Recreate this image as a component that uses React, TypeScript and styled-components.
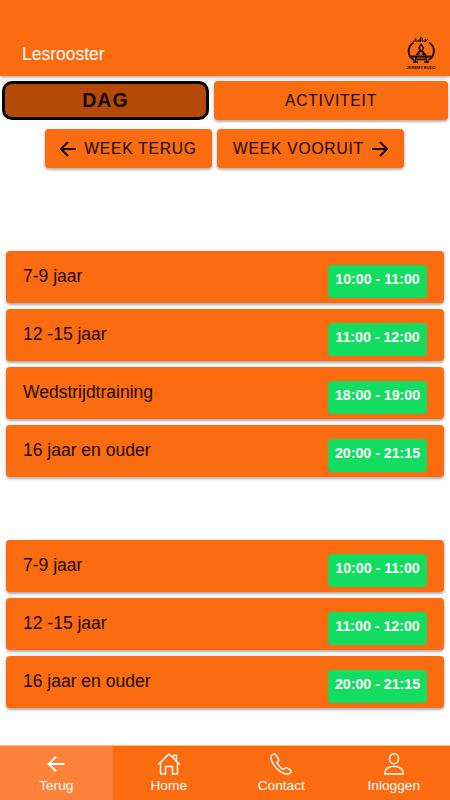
import React from "react";
import styled, { createGlobalStyle } from "styled-components";

const ORANGE = "#fb6b0f";

const GlobalStyle = createGlobalStyle`
  *, *::before, *::after { box-sizing: border-box; }
  body { margin: 0; background: #fff; font-family: "Liberation Sans", Arial, sans-serif; }
  button { font-family: inherit; border: 0; margin: 0; padding: 0; }
`;

const Screen = styled.div`
  display: flex;
  flex-direction: column;
  height: 800px;
  width: 100%;
  overflow: hidden;
  background: #fff;
`;

const Header = styled.header`
  flex: none;
  display: flex;
  align-items: flex-end;
  justify-content: space-between;
  height: 76px;
  padding: 0 13px 4px 22px;
  background: ${ORANGE};
  box-shadow: 0 1px 4px rgba(0, 0, 0, 0.4);
`;

const Title = styled.h1`
  margin: 0 0 8px;
  font-size: 17.5px;
  line-height: 20px;
  font-weight: 400;
  color: #fff;
`;

const Segments = styled.div`
  display: grid;
  grid-template-columns: 207px 234px;
  column-gap: 5px;
  padding: 5px 2px 0;
`;

const WeekNav = styled.div`
  display: flex;
  gap: 5px;
  padding: 9px 0 0 45px;
`;

const Button = styled.button<{ $selected?: boolean; $width?: number }>`
  display: flex;
  align-items: center;
  justify-content: center;
  gap: 8px;
  height: 39px;
  width: ${(p) => (p.$width ? `${p.$width}px` : "auto")};
  color: #150800;
  white-space: nowrap;
  background: ${(p) => (p.$selected ? "#b44a05" : ORANGE)};
  border: ${(p) => (p.$selected ? "3px solid #000" : "0")};
  border-radius: ${(p) => (p.$selected ? 10 : 4)}px;
  font-size: ${(p) => (p.$selected ? 19.5 : 15.6)}px;
  font-weight: ${(p) => (p.$selected ? 700 : 400)};
  letter-spacing: ${(p) => (p.$selected ? 1.1 : 0.8)}px;
  box-shadow: ${(p) => (p.$selected ? "none" : "0 2px 2px rgba(0,0,0,.2), 0 1px 4px rgba(0,0,0,.18)")};
`;

const DayList = styled.section<{ $top: number }>`
  display: flex;
  flex-direction: column;
  gap: 6px;
  padding: 0 6px;
  margin-top: ${(p) => p.$top}px;
`;

const Lesson = styled.article`
  display: flex;
  justify-content: space-between;
  align-items: flex-start;
  height: 52px;
  padding: 14px 17px 0;
  border-radius: 4px;
  background: ${ORANGE};
  box-shadow: 0 2px 2px rgba(0, 0, 0, 0.2), 0 1px 4px rgba(0, 0, 0, 0.2);
`;

const LessonName = styled.span`
  margin-top: 1px;
  font-size: 17.5px;
  line-height: 20px;
  color: #1b0b00;
`;

const TimeBadge = styled.span`
  width: 99px;
  height: 33px;
  padding-top: 6px;
  text-align: center;
  border-radius: 4px;
  background: #13dd60;
  color: #fff;
  font-size: 14.2px;
  line-height: 17px;
  font-weight: 700;
  white-space: nowrap;
`;

const TabBar = styled.nav`
  flex: none;
  display: grid;
  grid-template-columns: repeat(4, 1fr);
  height: 55px;
  margin-top: auto;
  border-top: 1px solid #fdb78c;
  background: ${ORANGE};
`;

const Tab = styled.button<{ $active?: boolean }>`
  display: flex;
  flex-direction: column;
  align-items: center;
  padding-top: 6px;
  color: #fff;
  background: ${(p) => (p.$active ? "#fc8239" : "transparent")};
  font-size: 13.7px;
  line-height: 16px;
`;

const TabIcon = styled.svg`
  width: 24px;
  height: 24px;
  margin-bottom: 2px;
  fill: none;
  stroke: currentColor;
  stroke-width: 1.4;
  stroke-linecap: round;
  stroke-linejoin: round;
`;

const ArrowSvg = styled.svg`
  flex: none;
  width: 16px;
  height: 16px;
  fill: none;
  stroke: currentColor;
  stroke-width: 2;
`;

const LogoBox = styled.div`
  display: flex;
  flex-direction: column;
  align-items: center;
  width: 32px;
  height: 36px;
`;

const LogoCaption = styled.span`
  margin-top: 1px;
  font-size: 4px;
  line-height: 6px;
  font-weight: 700;
  color: #160b04;
  white-space: nowrap;
`;

const Logo = () => (
  <LogoBox>
    <svg width="32" height="28" viewBox="0 0 32 28" fill="none" stroke="#160b04">
      <path d="M8.6 6.5A11.5 10.5 0 0 0 9 24M24 6.5A11.5 10.5 0 0 1 23.5 24" strokeWidth="1.9" />
      <path d="M9.5 3.5l1.5-1V6l3-2v2l1.5-4v4l2-4v4l3-3v3l2-3M8 5.5l3-1M15 1l2 1M19 6l2-1" strokeWidth=".85" />
      <path d="M16 8l2.5 4-1.5 3 4 4M16 8l-2 4 1.5 2-4 5M13 16l3-1 3 2M11 18.5l4-1M17 18l4 1" strokeWidth="1.5" />
      <path d="M6 20.5h20.5" strokeWidth="2" />
      <path d="M11.5 21l-2 6M20.5 21l2 6M8 26h5M19 26h5M12 23.3h8" strokeWidth="1.7" />
    </svg>
    <LogoCaption>JEREMY BUDO</LogoCaption>
  </LogoBox>
);

const Arrow = ({ forward = false }: { forward?: boolean }) => (
  <ArrowSvg viewBox="0 0 16 16">
    <path d={forward ? "M0 8h14.5M8 1l7 7-7 7" : "M16 8H1.5M8 1L1 8l7 7"} />
  </ArrowSvg>
);

const tabs = [
  { label: "Terug", icon: <path strokeWidth="2" strokeLinecap="butt" strokeLinejoin="miter" d="M20.5 12H5M12 4.7l-7.3 7.3 7.3 7.3" /> },
  {
    label: "Home",
    icon: <path d="M1.5 12.3L12 2l10.5 10.3M3.5 10.8V22h5v-7.5h7V22h5V10.8M16.5 6V3.2h3v6" />,
  },
  {
    label: "Contact",
    icon: (
      <path d="M4.1 2.2C2.2 3.1 1.5 4.7 2.1 7c1.6 6.1 7.2 12.1 13.3 14.7 2.3 1 4.7.7 6.3-1.1.8-.9.7-1.8-.2-2.5l-3.1-2.1c-1-.7-1.9-.4-2.7.5-.8.9-1.5 1-2.5.3-1.7-1.1-3.8-3.4-4.8-5.1-.6-1-.3-1.6.6-2.3.9-.7 1.1-1.5.4-2.6L7.2 3.3c-.7-1-1.7-1.6-3.1-1.1z" />
    ),
  },
  {
    label: "Inloggen",
    icon: (
      <>
        <ellipse cx="12" cy="6.8" rx="4.5" ry="5" />
        <path d="M2.6 22c0-4.8 3.5-7.6 9.4-7.6s9.4 2.8 9.4 7.6z" />
      </>
    ),
  },
];

const days = [
  {
    top: 83,
    lessons: [
      ["7-9 jaar", "10:00 - 11:00"],
      ["12 -15 jaar", "11:00 - 12:00"],
      ["Wedstrijdtraining", "18:00 - 19:00"],
      ["16 jaar en ouder", "20:00 - 21:15"],
    ],
  },
  {
    top: 63,
    lessons: [
      ["7-9 jaar", "10:00 - 11:00"],
      ["12 -15 jaar", "11:00 - 12:00"],
      ["16 jaar en ouder", "20:00 - 21:15"],
    ],
  },
];

export default function App() {
  return (
    <Screen>
      <GlobalStyle />
      <Header>
        <Title>Lesrooster</Title>
        <Logo />
      </Header>
      <Segments>
        <Button $selected>DAG</Button>
        <Button>ACTIVITEIT</Button>
      </Segments>
      <WeekNav>
        <Button $width={167}>
          <Arrow />
          WEEK TERUG
        </Button>
        <Button $width={187}>
          WEEK VOORUIT
          <Arrow forward />
        </Button>
      </WeekNav>
      {days.map((day, i) => (
        <DayList key={i} $top={day.top}>
          {day.lessons.map(([name, time]) => (
            <Lesson key={name}>
              <LessonName>{name}</LessonName>
              <TimeBadge>{time}</TimeBadge>
            </Lesson>
          ))}
        </DayList>
      ))}
      <TabBar>
        {tabs.map((tab, i) => (
          <Tab key={tab.label} $active={i === 0}>
            <TabIcon viewBox="0 0 24 24">{tab.icon}</TabIcon>
            {tab.label}
          </Tab>
        ))}
      </TabBar>
    </Screen>
  );
}
